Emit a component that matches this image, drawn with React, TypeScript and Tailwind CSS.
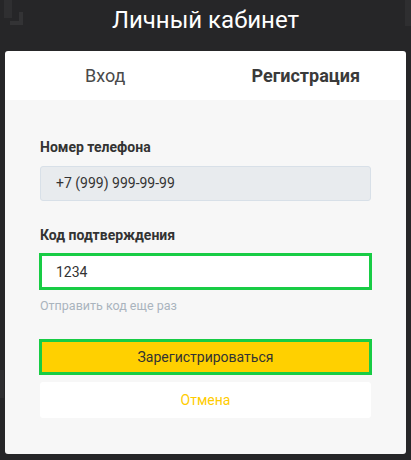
import React, { useState } from 'react';

const App = () => {
  const [code, setCode] = useState('1234');

  return (
    <div className="relative w-[411px] h-[460px] overflow-hidden bg-[#262628] font-['Roboto',sans-serif]">
      {/* faint background decor */}
      <div className="absolute left-[4px] top-0 w-[8px] h-[18px] bg-[#2f2f31]" />
      <div className="absolute left-[10px] top-[12px] w-[13px] h-[13px] border-r-[4px] border-b-[4px] border-[#333335]" />
      <div className="absolute right-0 top-0 w-[6px] h-[26px] bg-[#2e2e30]" />
      <div className="absolute left-0 top-[370px] w-[4px] h-[28px] bg-[#2e2e30]" />

      <div className="relative">
        <h1 className="h-[40px] leading-[40px] text-center text-white text-[24px]">Личный кабинет</h1>

        <div className="mt-[11px] mx-[5px] rounded-[3px] overflow-hidden">
          <div className="grid grid-cols-2 h-[49px] bg-white text-[18px]">
            <button className="flex items-center justify-center text-[#4a4a4a]">Вход</button>
            <button className="flex items-center justify-center font-bold text-[#3a3a3a]">Регистрация</button>
          </div>

          <div className="bg-[#f7f7f7] px-[35px] pt-[39px] pb-[36px] flex flex-col">
            <label className="text-[14px] leading-[17px] font-bold text-[#333]">Номер телефона</label>
            <div className="mt-[10px] h-[35px] flex items-center px-[15px] bg-[#e8ebee] border border-[#d8e0e8] rounded-[3px] text-[14px] text-[#333]">
              +7 (999) 999-99-99
            </div>

            <label className="mt-[26px] text-[14px] leading-[17px] font-bold text-[#333]">Код подтверждения</label>
            <input
              value={code}
              onChange={e => setCode(e.target.value)}
              className="mt-[9px] -mx-px h-[37px] px-[14px] bg-white border-[3px] border-[#18cc45] text-[14px] text-[#333] outline-none"
            />
            <div className="mt-[7px] text-[12.5px] leading-[17px] text-[#aab4be]">Отправить код еще раз</div>

            <button className="mt-[25px] -mx-px h-[36px] bg-[#ffd000] border-[3px] border-[#18cc45] text-[14px] text-[#333]">
              Зарегистрироваться
            </button>
            <button className="mt-[7px] h-[36px] bg-white rounded-[3px] text-[14px] text-[#ffcc00]">
              Отмена
            </button>
          </div>
        </div>
      </div>
    </div>
  );
};

export default App;
